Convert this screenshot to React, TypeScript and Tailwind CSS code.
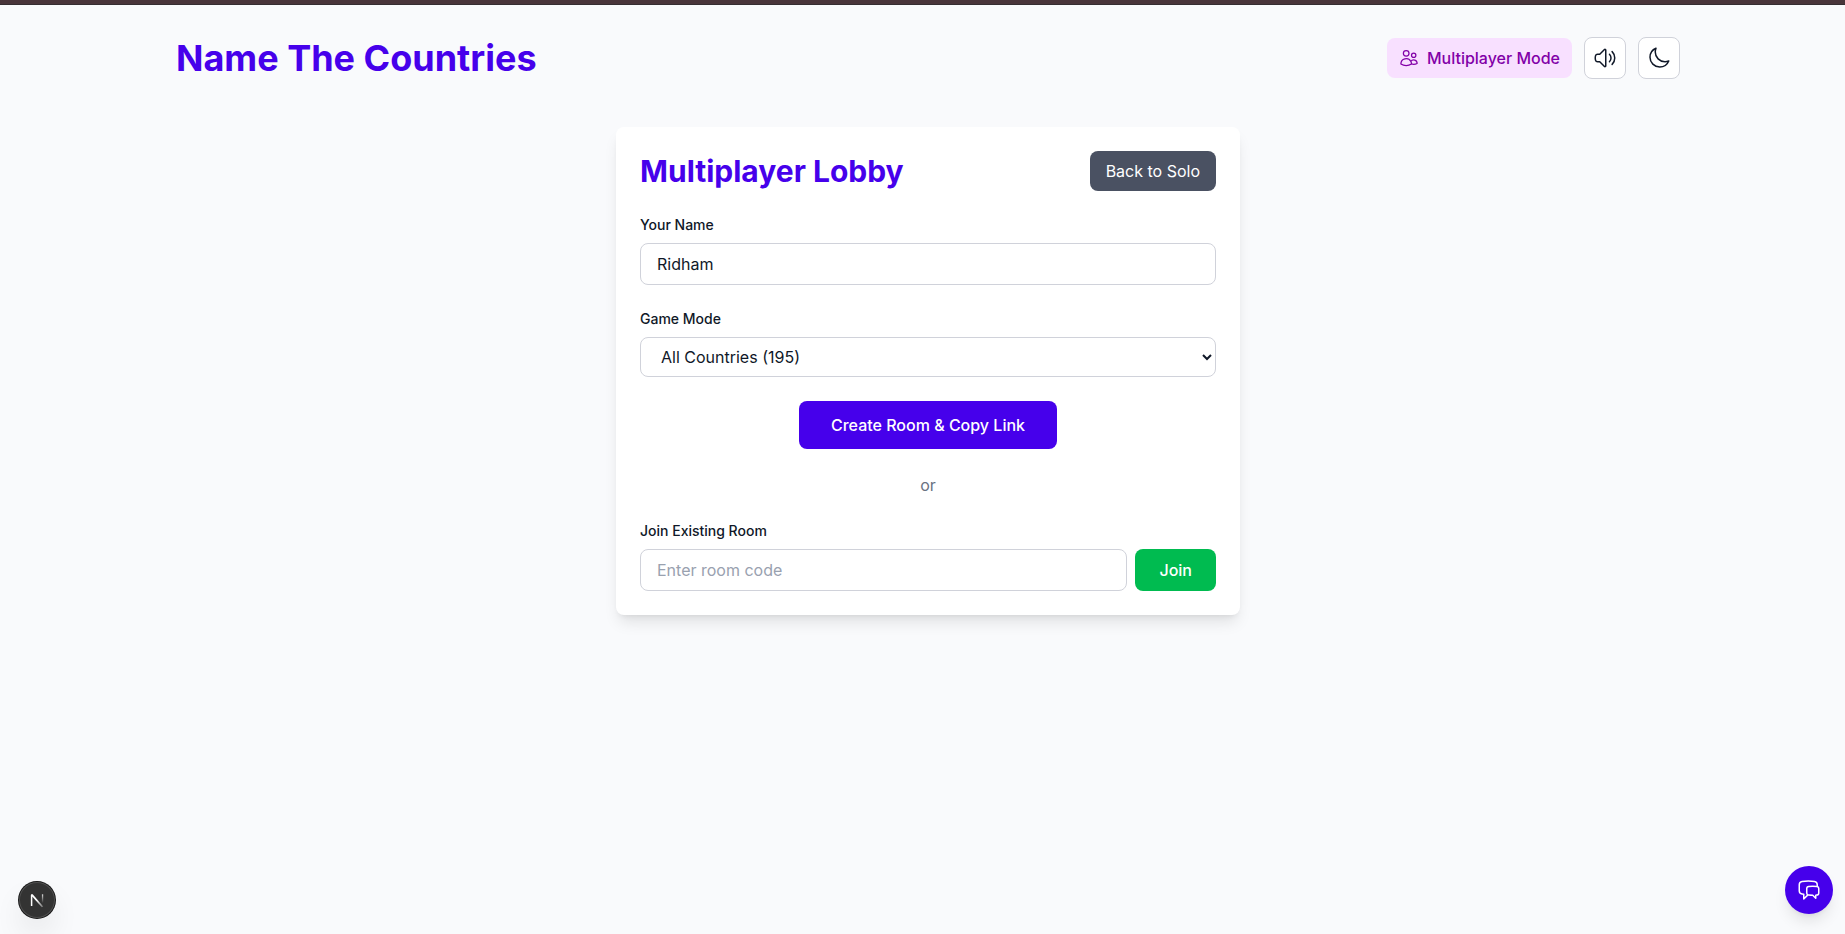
import { useState } from 'react';
import {
  HiOutlineChatBubbleLeftRight,
  HiOutlineMoon,
  HiOutlineSpeakerWave,
  HiOutlineUsers,
} from 'react-icons/hi2';

const fieldClass =
  'w-full rounded-lg border border-[#d0d2da] bg-white text-base text-[#101828] placeholder:text-[#99a1af]';
const labelClass = 'block text-sm font-medium text-[#101828]';

function Header() {
  return (
    <header className="flex items-center justify-between">
      <h1 className="text-4xl font-bold text-[#4600eb]">Name The Countries</h1>
      <div className="flex items-center gap-3">
        <button
          type="button"
          className="flex items-center gap-2 rounded-lg bg-[#f8e0ff] px-3 py-2 font-medium text-[#8200a8]"
        >
          <HiOutlineUsers className="size-5" />
          Multiplayer Mode
        </button>
        <button
          type="button"
          aria-label="Toggle sound"
          className="rounded-lg border border-[#d0d2da] bg-white p-2 text-[#101828]"
        >
          <HiOutlineSpeakerWave className="size-6" />
        </button>
        <button
          type="button"
          aria-label="Toggle theme"
          className="rounded-lg border border-[#d0d2da] bg-white p-2 text-[#101828]"
        >
          <HiOutlineMoon className="size-6" />
        </button>
      </div>
    </header>
  );
}

function Lobby() {
  const [name, setName] = useState('Ridham');
  const [code, setCode] = useState('');
  return (
    <section className="flex flex-col gap-6 rounded-lg bg-white p-6 shadow-lg">
      <div className="flex items-center justify-between">
        <h2 className="text-3xl font-bold text-[#4600eb]">Multiplayer Lobby</h2>
        <button type="button" className="rounded-lg bg-[#4a5162] px-4 py-2 text-white">
          Back to Solo
        </button>
      </div>

      <div className="flex flex-col gap-2">
        <label htmlFor="player-name" className={labelClass}>
          Your Name
        </label>
        <input
          id="player-name"
          type="text"
          value={name}
          onChange={(e) => setName(e.target.value)}
          className={`${fieldClass} px-4 py-2`}
        />
      </div>

      <div className="flex flex-col gap-2">
        <label htmlFor="game-mode" className={labelClass}>
          Game Mode
        </label>
        <select id="game-mode" className={`${fieldClass} h-10 px-4`}>
          <option>All Countries (195)</option>
        </select>
      </div>

      <button
        type="button"
        className="self-center rounded-lg bg-[#4600eb] px-8 py-3 font-medium text-white"
      >
        Create Room &amp; Copy Link
      </button>

      <p className="text-center text-[#6a7282]">or</p>

      <div className="flex flex-col gap-2">
        <label htmlFor="room-code" className={labelClass}>
          Join Existing Room
        </label>
        <div className="flex gap-2">
          <input
            id="room-code"
            type="text"
            placeholder="Enter room code"
            value={code}
            onChange={(e) => setCode(e.target.value)}
            className={`${fieldClass} min-w-0 flex-1 px-4 py-2`}
          />
          <button type="button" className="rounded-lg bg-[#00bb50] px-6 py-2 font-medium text-white">
            Join
          </button>
        </div>
      </div>
    </section>
  );
}

function DevBadge() {
  return (
    <button
      type="button"
      aria-label="Open developer tools"
      className="fixed bottom-4 left-[19px] flex size-9 items-center justify-center rounded-full bg-[#333333] shadow-[0_0_0_1px_#171717,inset_0_0_0_1px_rgba(255,255,255,0.14),0_16px_32px_-8px_rgba(0,0,0,0.24)]"
    >
      <svg className="size-9" viewBox="0 0 36 36" fill="none">
        <defs>
          <linearGradient id="diagonal" x1="18" y1="18" x2="24" y2="25" gradientUnits="userSpaceOnUse">
            <stop stopColor="white" />
            <stop offset="1" stopColor="white" stopOpacity="0.3" />
          </linearGradient>
          <linearGradient id="stem" x1="23" y1="12" x2="23" y2="21" gradientUnits="userSpaceOnUse">
            <stop stopColor="white" stopOpacity="0.85" />
            <stop offset="1" stopColor="white" stopOpacity="0" />
          </linearGradient>
        </defs>
        <path d="M12.6 24V12.8" stroke="white" strokeWidth="1.5" />
        <path d="M11.9 12.3h1.8L24.2 24.6l-1.4 .6L13 14.2z" fill="url(#diagonal)" />
        <path d="M22.9 12.3h1.3v8.7h-1.3z" fill="url(#stem)" />
      </svg>
    </button>
  );
}

export default function App() {
  return (
    <div className="min-h-screen bg-[#f9fafc] pl-[11px] font-[Inter,sans-serif] text-base text-[#101828]">
      <div className="-ml-[11px] h-[5px] border-b border-[#352d31] bg-[#49353a]" />
      <div className="mx-auto max-w-[1536px] px-4 pt-8">
        <Header />
        <main className="mx-auto mt-6 max-w-2xl p-6">
          <Lobby />
        </main>
      </div>
      <DevBadge />
      <button
        type="button"
        aria-label="Open chat"
        className="fixed right-3 bottom-5 flex size-12 items-center justify-center rounded-full bg-[#4600eb] text-white shadow-lg"
      >
        <HiOutlineChatBubbleLeftRight className="size-6" />
      </button>
    </div>
  );
}
